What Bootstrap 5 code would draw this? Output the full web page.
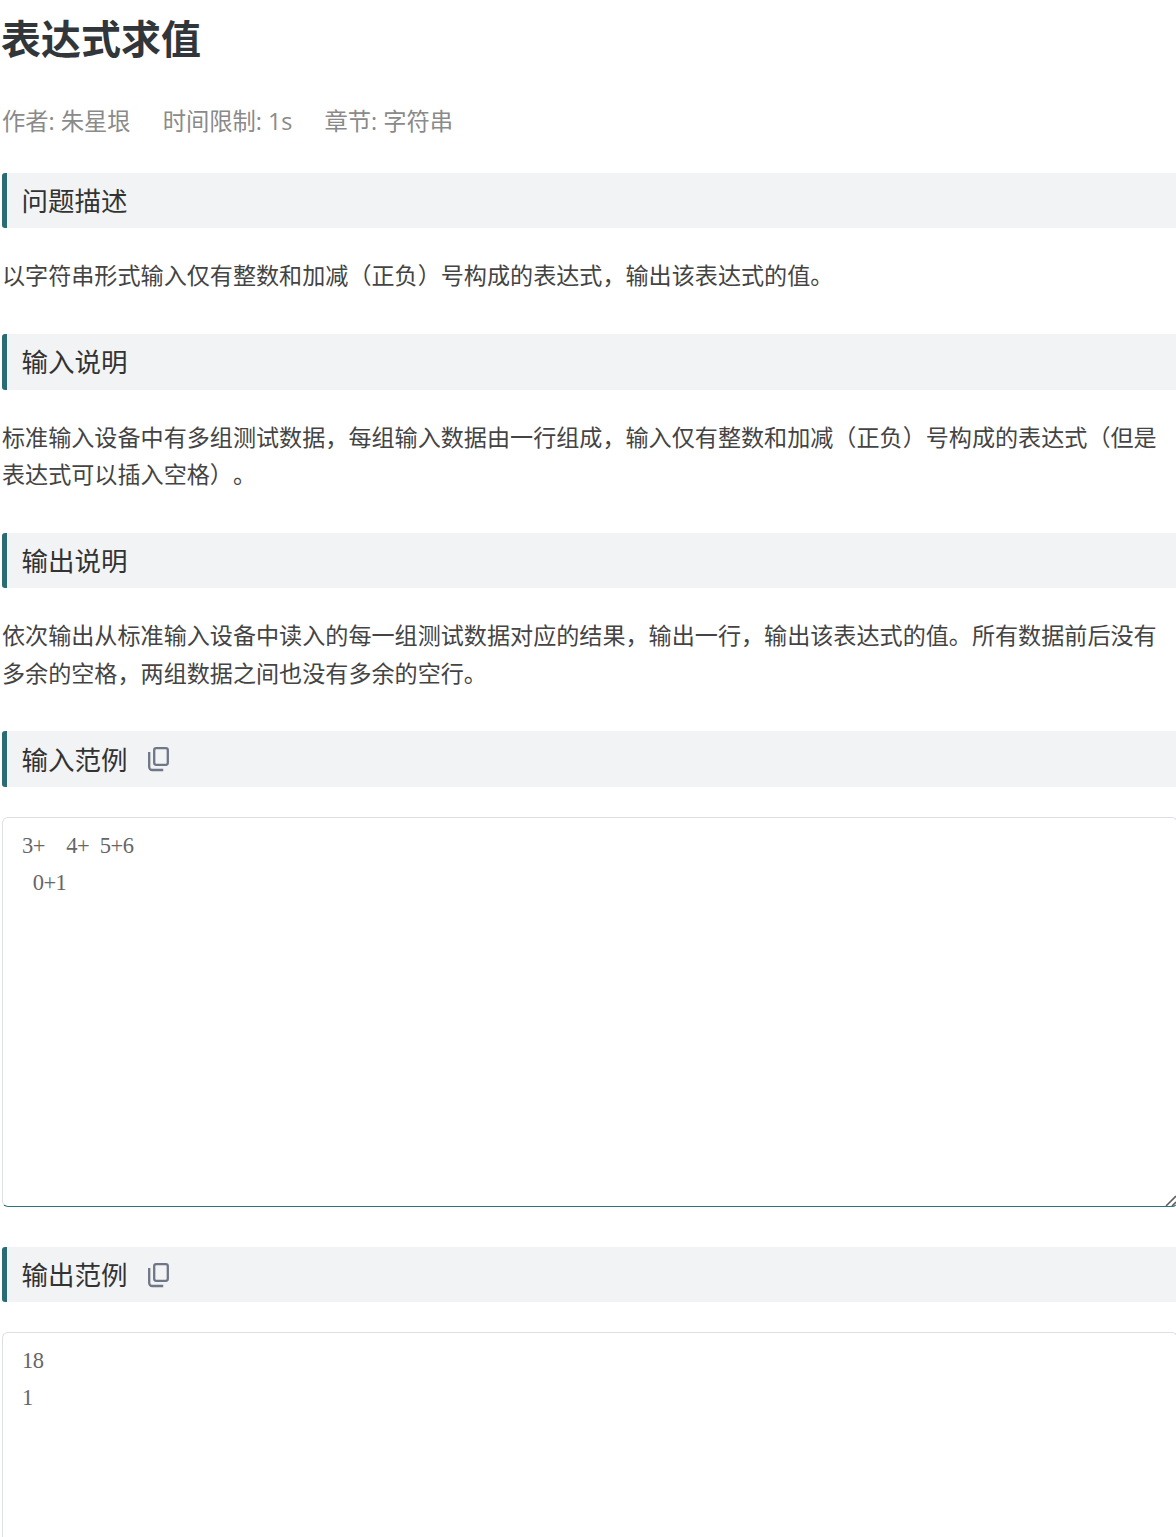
<!DOCTYPE html>
<html lang="zh-CN">
<head>
<meta charset="utf-8">
<title>表达式求值</title>
<link href="https://cdn.jsdelivr.net/npm/bootstrap@5.3.0/dist/css/bootstrap.min.css" rel="stylesheet">
<style>
html,body{height:1537px;overflow:hidden;background:#fff}
body{font-family:"Open Sans","Noto Sans CJK SC",sans-serif;color:#333;text-spacing-trim:space-all;font-kerning:none}
.prob-page{width:1178px;padding-left:2px}
.prob-title{font-family:"Noto Sans CJK SC",sans-serif;font-size:40px;font-weight:700;line-height:56px;margin:9px 0 0 -1px;color:#31363a}
.prob-meta{font-size:23.3px;line-height:37px;color:#8a8a8a;margin-top:38px;margin-bottom:32.75px;gap:32px}
.prob-bar{height:55.5px;background:#f2f3f5;border-left:5px solid #2b6c72;border-radius:3px 0 0 3px;padding:3px 0 0 14.5px;font-size:26.5px;color:#333;margin-bottom:29px;gap:19px}
.prob-text{font-size:23.1px;line-height:37.4px;color:#444;margin:0 0 39.4px}
.prob-field{margin-top:30px;margin-bottom:40px}
.prob-sample{display:block;width:100%;height:390px;padding:9px 19px;font-family:"Liberation Serif","Noto Sans CJK SC",serif;font-size:22.5px;line-height:37px;letter-spacing:-.5px;word-spacing:5.5px;color:#666;border:1px solid #dcdfe6;border-bottom-color:#2f7378;border-radius:6px;outline:0;white-space:pre-wrap;resize:none}
.prob-copy{width:24px;height:26px;margin-top:-3px;color:#6f7686}
.prob-grip{position:absolute;right:1px;bottom:0;width:12px;height:12px;color:#5f5f5f}
</style>
</head>
<body>
<div class="prob-page">
  <h1 class="prob-title">表达式求值</h1>
  <div class="prob-meta d-flex"><span>作者: 朱星垠</span><span>时间限制: 1s</span><span>章节: 字符串</span></div>

  <div class="prob-bar d-flex align-items-center">问题描述</div>
  <p class="prob-text">以字符串形式输入仅有整数和加减（正负）号构成的表达式，输出该表达式的值。</p>

  <div class="prob-bar d-flex align-items-center">输入说明</div>
  <p class="prob-text">标准输入设备中有多组测试数据，每组输入数据由一行组成，输入仅有整数和加减（正负）号构成的表达式（但是表达式可以插入空格）。</p>

  <div class="prob-bar d-flex align-items-center">输出说明</div>
  <p class="prob-text">依次输出从标准输入设备中读入的每一组测试数据对应的结果，输出一行，输出该表达式的值。所有数据前后没有多余的空格，两组数据之间也没有多余的空行。</p>

  <div class="prob-bar d-flex align-items-center mb-0"><span>输入范例</span>
    <svg class="prob-copy" viewBox="0 0 24 26" fill="none" stroke="currentColor" stroke-width="2.3"><rect x="7.2" y="2.2" width="13.6" height="16.6" rx="2"/><path d="M2.2 6v15a3 3 0 0 0 3 3h11"/></svg>
  </div>
  <div class="prob-field position-relative">
    <textarea class="prob-sample" readonly>3+  4+ 5+6
 0+1</textarea>
    <svg class="prob-grip" viewBox="0 0 12 12" fill="none" stroke="currentColor" stroke-width="1.6"><path d="M1 11 11 1M7 11l4-4"/></svg>
  </div>

  <div class="prob-bar d-flex align-items-center mb-0"><span>输出范例</span>
    <svg class="prob-copy" viewBox="0 0 24 26" fill="none" stroke="currentColor" stroke-width="2.3"><rect x="7.2" y="2.2" width="13.6" height="16.6" rx="2"/><path d="M2.2 6v15a3 3 0 0 0 3 3h11"/></svg>
  </div>
  <div class="prob-field">
    <textarea class="prob-sample" readonly>18
1</textarea>
  </div>
</div>
<script src="https://cdn.jsdelivr.net/npm/bootstrap@5.3.0/dist/js/bootstrap.bundle.min.js"></script>
</body>
</html>
